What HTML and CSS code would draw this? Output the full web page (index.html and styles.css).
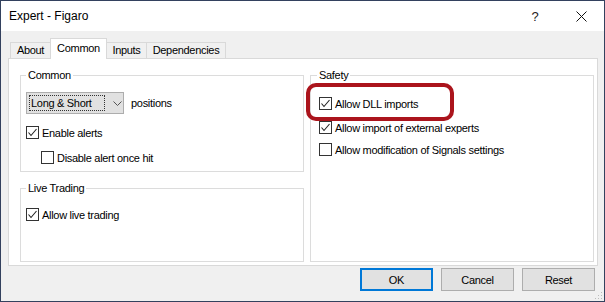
FILE: index.html
```html
<!doctype html>
<html>

<head>
	<meta charset="utf-8" />
	<title>Expert - Figaro</title>
	<link rel="stylesheet" href="styles.css">
</head>

<body>
	<div class="window">
		<div class="titlebar">
			<span class="title">Expert - Figaro</span>
			<span class="tb-btn tb-help">?</span>
			<span class="tb-btn">
				<svg width="11" height="11" viewBox="0 0 11 11"><path d="M0.5 0.5L10.5 10.5M10.5 0.5L0.5 10.5" stroke="#111" stroke-width="1" fill="none"/></svg>
			</span>
		</div>

		<div class="client">
			<div class="tabs">
				<span class="tab tab-about">About</span>
				<span class="tab tab-common active">Common</span>
				<span class="tab tab-inputs">Inputs</span>
				<span class="tab tab-deps">Dependencies</span>
			</div>

			<div class="panel">
				<div class="col">
					<fieldset class="group group-common">
						<legend>Common</legend>
						<div class="group-body">
							<div class="combo-row">
								<div class="combo">
									<span class="combo-text">Long &amp; Short</span>
									<svg class="chevron" width="9" height="5" viewBox="0 0 9 5"><polyline points="0.5,0.5 4.5,4.5 8.5,0.5" stroke="#555" stroke-width="1" fill="none"/></svg>
								</div>
								<span>positions</span>
							</div>
							<div class="check-row row-enable">
								<span class="box"><svg width="11" height="11" viewBox="0 0 11 11"><polyline points="1.5,5.5 4,8.5 9.5,2" stroke="#222" stroke-width="1.1" fill="none"/></svg></span>
								<span>Enable alerts</span>
							</div>
							<div class="check-row row-disable">
								<span class="box"></span>
								<span>Disable alert once hit</span>
							</div>
						</div>
					</fieldset>

					<fieldset class="group group-live">
						<legend>Live Trading</legend>
						<div class="group-body">
							<div class="check-row">
								<span class="box"><svg width="11" height="11" viewBox="0 0 11 11"><polyline points="1.5,5.5 4,8.5 9.5,2" stroke="#222" stroke-width="1.1" fill="none"/></svg></span>
								<span>Allow live trading</span>
							</div>
						</div>
					</fieldset>
				</div>

				<fieldset class="group group-safety">
					<legend>Safety</legend>
					<div class="group-body">
						<div class="check-row">
							<span class="box"><svg width="11" height="11" viewBox="0 0 11 11"><polyline points="1.5,5.5 4,8.5 9.5,2" stroke="#222" stroke-width="1.1" fill="none"/></svg></span>
							<span>Allow DLL imports</span>
						</div>
						<div class="check-row row-ext">
							<span class="box"><svg width="11" height="11" viewBox="0 0 11 11"><polyline points="1.5,5.5 4,8.5 9.5,2" stroke="#222" stroke-width="1.1" fill="none"/></svg></span>
							<span>Allow import of external experts</span>
						</div>
						<div class="check-row row-signals">
							<span class="box"></span>
							<span>Allow modification of Signals settings</span>
						</div>
					</div>
				</fieldset>
			</div>

			<div class="buttons">
				<button class="btn btn-default" type="button">OK</button>
				<button class="btn" type="button">Cancel</button>
				<button class="btn" type="button">Reset</button>
			</div>
		</div>

		<!-- red marker drawn over the dialog -->
		<div class="highlight"></div>
		<svg class="grip" width="8" height="8" viewBox="0 0 8 8">
			<rect x="6" y="0" width="1" height="1" fill="#bbb"/>
			<rect x="3" y="3" width="1" height="1" fill="#bbb"/>
			<rect x="6" y="3" width="1" height="1" fill="#bbb"/>
			<rect x="0" y="6" width="1" height="1" fill="#bbb"/>
			<rect x="3" y="6" width="1" height="1" fill="#bbb"/>
			<rect x="6" y="6" width="1" height="1" fill="#bbb"/>
		</svg>
	</div>
</body>

</html>
```

FILE: styles.css
```css
* {
	margin: 0px;
	padding: 0px;
	box-sizing: border-box;
}

body {
	font-family: "Liberation Sans", Arial, sans-serif;
	font-size: 11px;
	letter-spacing: -0.3px;
	color: #000;
	background: #fff;
}

/* window frame */
.window {
	position: relative;
	width: 605px;
	height: 302px;
	border: 1px solid #33415e;
	background: #f0f0f0;
	display: flex;
	flex-direction: column;
}

.titlebar {
	height: 30px;
	background: #fff;
	display: flex;
	align-items: center;
}

.title {
	font-size: 12px;
	letter-spacing: 0;
	padding-left: 8px;
}

.tb-btn {
	width: 46px;
	height: 30px;
	display: flex;
	align-items: center;
	justify-content: center;
}

.tb-help {
	margin-left: auto;
	font-size: 13px;
	color: #222;
}

.client {
	flex: 1;
	display: flex;
	flex-direction: column;
}

/* tabs */
.tabs {
	height: 20px;
	margin: 7px 0 0 9px;
	display: flex;
	align-items: flex-end;
}

.tab {
	height: 16px;
	line-height: 15px;
	text-align: center;
	border: 1px solid #d9d9d9;
	border-bottom: none;
	background: #f0f0f0;
	margin-left: -1px;
}

.tab-about { width: 41px; margin-left: 0; }
.tab-common { width: 57px; }
.tab-inputs { width: 41px; }
.tab-deps { width: 80px; }

.tab.active {
	position: relative;
	z-index: 1;
	height: 21px;
	line-height: 18px;
	margin-bottom: -1px;
	background: #fff;
}

.panel {
	height: 208px;
	margin: 0 6px 0 7px;
	border: 1px solid #d9d9d9;
	background: #fff;
	padding: 10px 3px 3px 11px;
	display: grid;
	grid-template-columns: 284px 284px;
	gap: 6px;
}

.col {
	display: flex;
	flex-direction: column;
	gap: 10px;
}

/* group boxes */
.group {
	border: 1px solid #dcdcdc;
	min-width: 0;
}

.group legend {
	line-height: 12px;
	padding: 0 2px;
	margin-left: 5px;
}

.group-common { height: 103px; }
.group-live { height: 80px; }

.group-common .group-body { padding: 11px 0 0 5px; }
.group-live .group-body { padding: 14px 0 0 5px; }
.group-safety .group-body { padding: 16px 0 0 8px; }
.group-safety legend { margin-left: 6px; }

.combo-row {
	display: flex;
	align-items: center;
	gap: 7px;
}

.combo {
	width: 98px;
	height: 22px;
	border: 1px solid #adadad;
	background: #e1e1e1;
	display: flex;
	align-items: center;
	padding-left: 2px;
}

.combo-text {
	width: 76px;
	height: 16px;
	line-height: 14px;
	padding-left: 1px;
	border: 1px dotted #333;
}

.chevron {
	margin-left: 8px;
}

.check-row {
	height: 13px;
	display: flex;
	align-items: center;
	gap: 3px;
}

.box {
	width: 13px;
	height: 13px;
	border: 1px solid #333;
	background: #fff;
	display: flex;
	align-items: center;
	justify-content: center;
}

.row-enable { margin-top: 12px; }
.row-disable { margin-top: 12px; padding-left: 15px; }
.row-ext { margin-top: 11px; }
.row-signals { margin-top: 9px; }

/* bottom buttons */
.buttons {
	display: flex;
	justify-content: flex-end;
	gap: 8px;
	margin-top: 2px;
	padding-right: 9px;
}

.btn {
	width: 73px;
	height: 23px;
	font-family: "Liberation Sans", Arial, sans-serif;
	font-size: 11px;
	letter-spacing: -0.3px;
	color: #000;
	background: #e1e1e1;
	border: 1px solid #adadad;
}

.btn-default {
	border: 2px solid #0078d7;
}

.highlight {
	position: absolute;
	left: 305px;
	top: 82px;
	width: 148px;
	height: 38px;
	border: 4px solid #ab141c;
	border-radius: 10px;
}

.grip {
	position: absolute;
	right: 1px;
	bottom: 1px;
}
```
